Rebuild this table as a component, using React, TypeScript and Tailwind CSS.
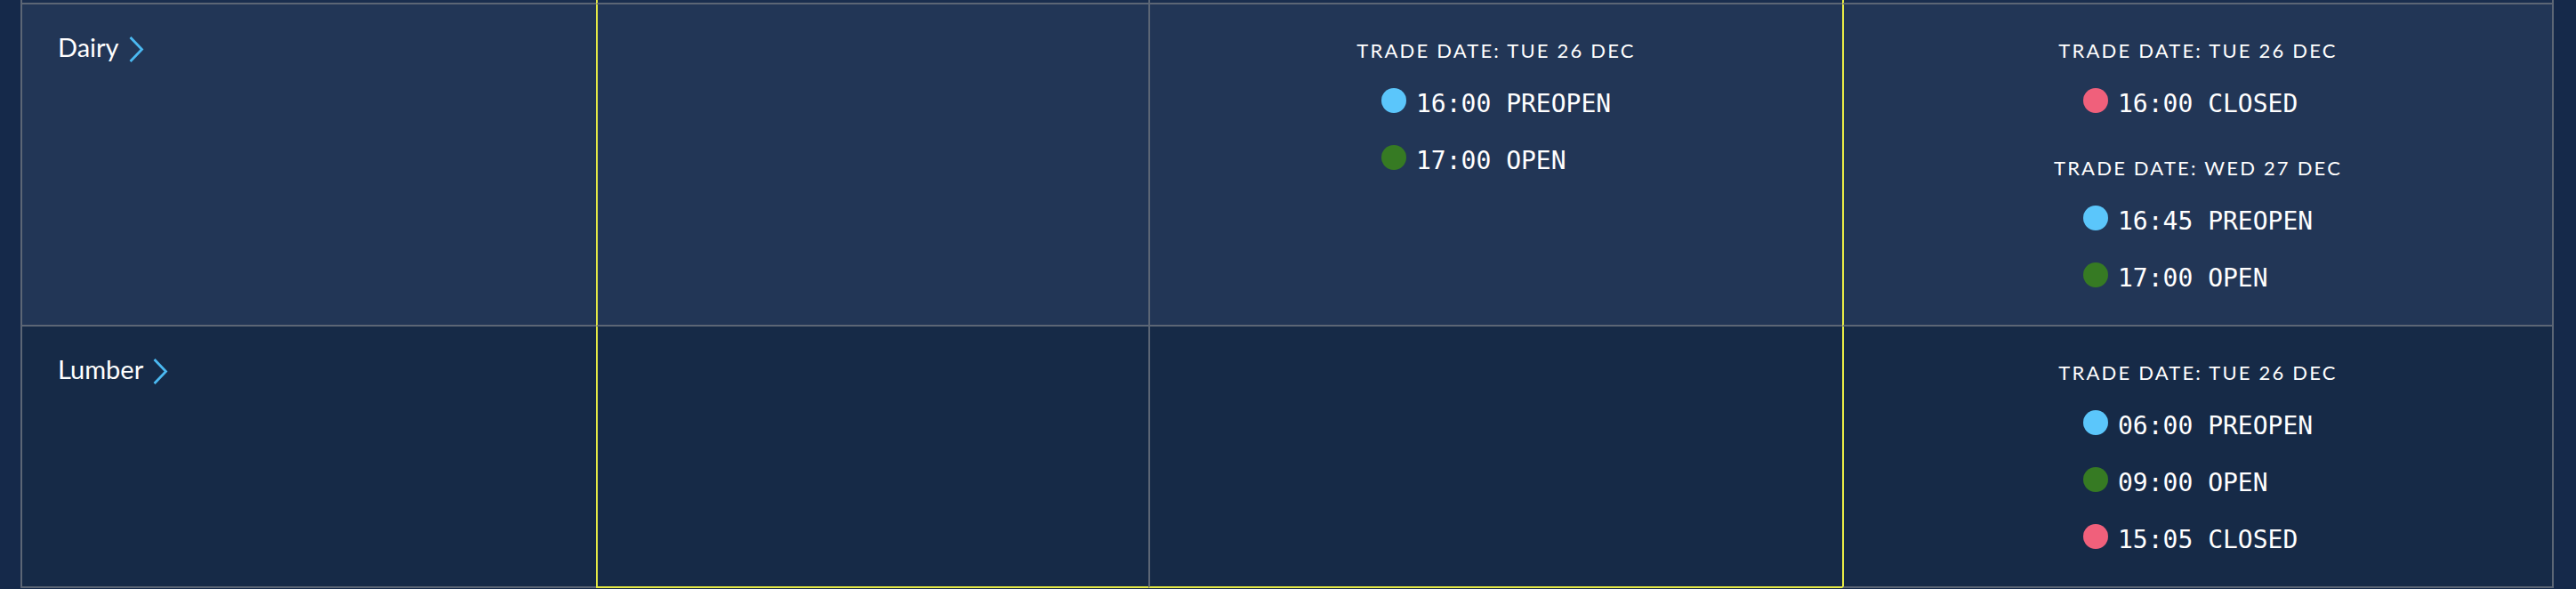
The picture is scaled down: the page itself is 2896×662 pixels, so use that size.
import React from "react";

type Status = "PREOPEN" | "OPEN" | "CLOSED";
type Session = { date: string; items: [string, Status][] };
type Row = { name: string; bg: string; mid: Session[]; last: Session[] };

const dotColor: Record<Status, string> = {
  PREOPEN: "bg-[#5bc6fb]",
  OPEN: "bg-[#367a23]",
  CLOSED: "bg-[#f0607b]",
};

const rows: Row[] = [
  {
    name: "Dairy",
    bg: "bg-[#223656]",
    mid: [{ date: "TUE 26 DEC", items: [["16:00", "PREOPEN"], ["17:00", "OPEN"]] }],
    last: [
      { date: "TUE 26 DEC", items: [["16:00", "CLOSED"]] },
      { date: "WED 27 DEC", items: [["16:45", "PREOPEN"], ["17:00", "OPEN"]] },
    ],
  },
  {
    name: "Lumber",
    bg: "bg-[#162a47]",
    mid: [],
    last: [
      {
        date: "TUE 26 DEC",
        items: [["06:00", "PREOPEN"], ["09:00", "OPEN"], ["15:05", "CLOSED"]],
      },
    ],
  },
];

function Chevron() {
  return (
    <svg width="17" height="29" viewBox="0 0 17 29" className="ml-[11px] mt-[5px]">
      <polyline
        points="2.5,2 14.5,14.5 2.5,27"
        fill="none"
        stroke="#4bb9f1"
        strokeWidth="2.8"
        strokeLinecap="square"
      />
    </svg>
  );
}

function Sessions({ sessions }: { sessions: Session[] }) {
  return (
    <div className="pt-[40px] pb-[36px] flex flex-col items-center">
      {sessions.map((s, i) => (
        <div key={i} className={i > 0 ? "mt-[44px]" : ""}>
          <p className="text-center font-['Lato','Noto_Sans',sans-serif] text-[22px] leading-[24px] tracking-[0.1em] text-white">
            TRADE DATE: {s.date}
          </p>
          <div className="mx-auto mt-[32px] w-[258px] space-y-[32px]">
            {s.items.map(([time, status]) => (
              <div key={time + status} className="flex h-[32px] items-center">
                <span
                  className={`${dotColor[status]} h-[28px] w-[28px] shrink-0 -translate-y-[4px] rounded-full`}
                />
                <span className="ml-[11px] whitespace-pre font-['DejaVu_Sans_Mono',monospace] text-[28px] leading-[32px] text-white">
                  {time} {status}
                </span>
              </div>
            ))}
          </div>
        </div>
      ))}
    </div>
  );
}

export default function App() {
  return (
    <div className="h-[662px] w-[2896px] overflow-hidden bg-[#15294a] pl-[23px] pr-[25px]">
      <div className="grid grid-cols-[647px_621px_780px_800px]">
        {/* tail of the row above */}
        <div className="h-[5px] border-b-2 border-l-2 border-[#5c6675] bg-[#1a2e4e]" />
        <div className="h-[5px] border-b-2 border-l-2 border-[#5c6675] border-l-[#e6ea45] bg-[#1a2e4e]" />
        <div className="h-[5px] border-b-2 border-l-2 border-[#5c6675] bg-[#1a2e4e]" />
        <div className="h-[5px] border-x-2 border-b-2 border-[#5c6675] border-l-[#e6ea45] bg-[#1a2e4e]" />

        {rows.map((r, i) => {
          const lastRow = i === rows.length - 1;
          return (
            <React.Fragment key={r.name}>
              <div className={`${r.bg} border-b-2 border-l-2 border-[#5c6675] pl-[40px] pt-[31px]`}>
                <div className="flex items-start">
                  <span className="font-['Lato','Noto_Sans',sans-serif] text-[29px] leading-[34px] text-white">
                    {r.name}
                  </span>
                  <Chevron />
                </div>
              </div>
              <div
                className={`${r.bg} border-b-2 border-l-2 border-[#5c6675] border-l-[#e6ea45] ${
                  lastRow ? "border-b-[#e6ea45]" : ""
                }`}
              />
              <div
                className={`${r.bg} border-b-2 border-l-2 border-[#5c6675] ${
                  lastRow ? "border-b-[#e6ea45]" : ""
                }`}
              >
                <Sessions sessions={r.mid} />
              </div>
              <div className={`${r.bg} border-x-2 border-b-2 border-[#5c6675] border-l-[#e6ea45]`}>
                <Sessions sessions={r.last} />
              </div>
            </React.Fragment>
          );
        })}
      </div>
    </div>
  );
}
